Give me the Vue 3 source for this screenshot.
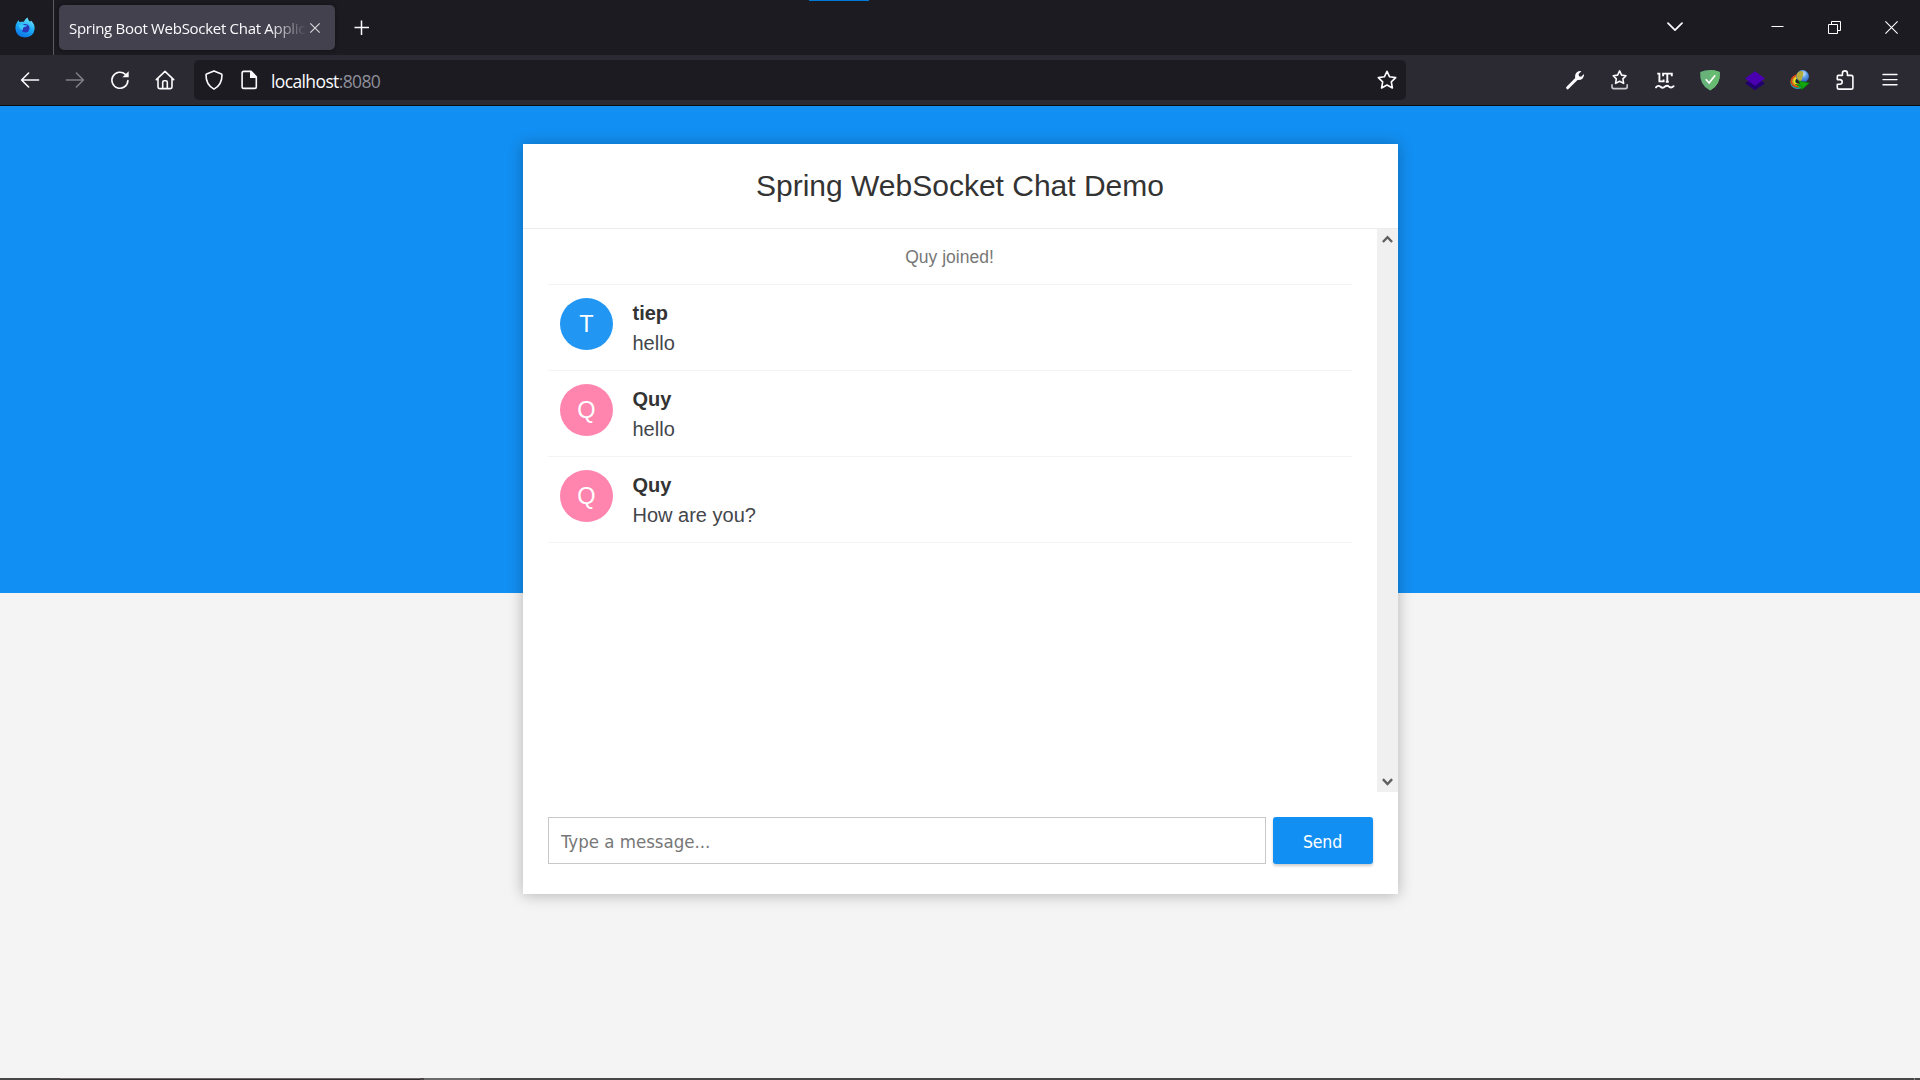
<script setup>
const messages = [
  { sender: 'tiep', text: 'hello', color: '#2196f3' },
  { sender: 'Quy', text: 'hello', color: '#ff85af' },
  { sender: 'Quy', text: 'How are you?', color: '#ff85af' },
]
</script>

<template>
  <div class="screen">
    <header class="tabstrip">
      <div class="view-btn">
        <svg width="20" height="21" viewBox="0 0 20 21">
          <defs>
            <linearGradient id="fx" x1="0.7" y1="0" x2="0.3" y2="1">
              <stop offset="0" stop-color="#6fe6fb" />
              <stop offset="0.5" stop-color="#1cabf7" />
              <stop offset="1" stop-color="#0a72e6" />
            </linearGradient>
          </defs>
          <path d="M2.3 4.8 L3.6 3.2 L4.4 5 Q6.3 4.4 8.8 4.8 Q10 1.8 12.6 0.4 Q13 3 14.8 4.4 Q16 4.6 16 3.6 Q20 7.4 19.6 12 Q18.6 20.2 10 20.4 Q1 20.2 0.4 11.4 Q0.3 7.6 2.3 4.8Z" fill="url(#fx)" />
          <circle cx="10.3" cy="11.3" r="4.2" fill="#2b36b8" />
          <path d="M3.6 8 Q6.4 6.6 9.6 8.2 Q11 8.4 12.2 8.2 Q11.4 10.2 9 10 Q7.2 11.2 8 13.2 Q4.6 12.6 3.6 8Z" fill="#3bc6fa" />
        </svg>
      </div>
      <div class="tab">
        <span class="tab-title">Spring Boot WebSocket Chat Application</span>
        <svg class="tab-close" width="12" height="12" viewBox="0 0 12 12"><path d="M1.3 1.3 L10.7 10.7 M10.7 1.3 L1.3 10.7" stroke="#d6d6da" stroke-width="1.2" fill="none" /></svg>
      </div>
      <div class="new-tab">
        <svg width="16" height="16" viewBox="0 0 16 16"><path d="M7.5 0.5 V15 M0.5 7.5 H15" stroke="#fbfbfe" stroke-width="1.5" fill="none" /></svg>
      </div>
      <div class="spacer"></div>
      <div class="list-tabs">
        <svg width="16" height="10" viewBox="0 0 16 10"><path d="M1 1.2 L8 8.2 L15 1.2" stroke="#fbfbfe" stroke-width="1.7" fill="none" stroke-linecap="round" stroke-linejoin="round" /></svg>
      </div>
      <div class="win-btn"><svg width="13" height="13" viewBox="0 0 13 13"><path d="M0.5 5.5 H12.5" stroke="#fff" /></svg></div>
      <div class="win-btn"><svg width="13" height="13" viewBox="0 0 13 13"><path d="M0.5 3.5 H9.5 V12.5 H0.5Z M3.5 3.5 V0.5 H12.5 V9.5 H9.5" stroke="#fff" fill="none" /></svg></div>
      <div class="win-btn"><svg width="13" height="13" viewBox="0 0 13 13"><path d="M0.4 0.4 L12.6 12.6 M12.6 0.4 L0.4 12.6" stroke="#fff" stroke-width="1.1" /></svg></div>
    </header>

    <nav class="toolbar">
      <div class="tool"><svg viewBox="0 0 20 20"><path d="M18.6 10 H1.8 M8.6 3 L1.6 10 L8.6 17" /></svg></div>
      <div class="tool dim"><svg viewBox="0 0 20 20"><path d="M1.4 10 H18.2 M11.4 3 L18.4 10 L11.4 17" /></svg></div>
      <div class="tool"><svg viewBox="0 0 20 20"><path d="M17.9 10.6 A8 8 0 1 1 15.4 4.4" /><path class="solid" d="M18.7 1.2 V7.3 H12.4 Z" /></svg></div>
      <div class="tool home"><svg viewBox="0 0 20 20"><path d="M1.3 9.6 L10 1.3 L18.7 9.6 M3 8.3 V17 Q3 18.6 4.6 18.6 H15.4 Q17 18.6 17 17 V8.3 M7.7 18.4 V12.2 Q7.7 10.7 9.2 10.7 H10.8 Q12.3 10.7 12.3 12.2 V18.4" /></svg></div>

      <div class="urlbar">
        <div class="url-icon"><svg viewBox="0 0 20 20"><path d="M10 0.9 L17.4 3.9 Q18 4.2 18 5 Q18 15 10 19.1 Q2 15 2 5 Q2 4.2 2.6 3.9 Z" /></svg></div>
        <div class="url-icon doc"><svg viewBox="0 0 20 20"><path d="M12 1.4 H4.8 Q3.1 1.4 3.1 3.1 V16.7 Q3.1 18.4 4.8 18.4 H15.6 Q17.3 18.4 17.3 16.7 V6.8 Z" /><path class="solid" d="M11 1 V8 H17.6 V6.8 L12.2 1Z" /></svg></div>
        <span class="url">localhost<span class="port">:8080</span></span>
        <div class="spacer"></div>
        <div class="url-icon star"><svg viewBox="0 0 20 20"><path d="M10 1.3 L12.6 6.8 L18.7 7.6 L14.3 11.9 L15.4 18 L10 15 L4.6 18 L5.7 11.9 L1.3 7.6 L7.4 6.8 Z" /></svg></div>
      </div>
      <div class="spacer"></div>

      <div class="tool"><svg viewBox="0 0 20 20"><path d="M2.6 17.8 L12 8.4" stroke-width="3" stroke="#fbfbfe" /><path class="solid" d="M10.3 8.2 Q9.4 4.4 12.1 2.1 Q14 0.6 16.4 1.2 L13.6 4.1 L14 6.3 L16.1 6.7 L19 3.9 Q19.4 6.6 17.7 8.4 Q15.4 10.6 12 9.9Z" /></svg></div>
      <div class="tool"><svg viewBox="0 0 20 20"><path d="M9.6 0.9 L11.6 5.1 L16 5.8 L12.9 8.9 L13.6 13.4 L9.6 11.3 L5.6 13.4 L6.3 8.9 L3.2 5.8 L7.6 5.1 Z" /><path d="M2 14.9 V16.8 Q2 18.6 3.8 18.6 H15.4 Q17.2 18.6 17.2 16.8 V14.9" stroke="#c9c9cd" /></svg></div>
      <div class="tool"><svg viewBox="0 0 20 20"><path d="M2.2 3.6 H4.4 V11.4 H8.6 V9.4 M8.1 6.2 V3.6 H16.8 V6.2 M12.3 3.8 V12.3 M10.8 11.8 H13.8" stroke-width="1.9" stroke-linecap="butt" stroke-linejoin="miter" /><path d="M1 17.4 Q3.4 14.6 5.6 16.8 Q7.8 18.8 10 16.6 Q12.2 14.8 14.2 16.8 Q16.4 18.4 18.6 16.2" stroke-width="1.9" /></svg></div>
      <div class="tool"><svg viewBox="0 0 20 20"><path d="M10 0 Q15.2 0.2 19.8 2 Q20.8 15 10 20.6 Q-0.8 15 0.2 2 Q4.8 0.2 10 0Z" fill="#67b279" stroke="none" /><path d="M10 0 V20.6 Q20.8 15 19.8 2 Q15.2 0.2 10 0Z" fill="#68bc71" stroke="none" /><path d="M6.2 9.8 L9.1 13 L14.8 5.8" stroke="#fff" stroke-width="1.7" /></svg></div>
      <div class="tool"><svg viewBox="0 0 20 20"><path d="M0 13.2 L10 6.5 L20 13.2 L10 20.2Z" fill="#22006f" stroke="none" /><path d="M0 8.6 L10 1.2 L20 8.6 L10 15.8Z" fill="#4a00b0" stroke="none" /></svg></div>
      <div class="tool"><svg viewBox="0 0 20 20">
        <defs>
          <radialGradient id="globe" cx="0.55" cy="0.3" r="0.75"><stop offset="0" stop-color="#d7ecff" /><stop offset="0.4" stop-color="#5b9ce8" /><stop offset="1" stop-color="#1d4fb0" /></radialGradient>
        </defs>
        <path d="M8 4.4 Q0.2 6 0.2 12.2 Q0.6 18.2 8.4 18.8 Q12 18.8 14 17.4 L12 14.4 Q6 15.4 5.6 11 Q5.8 8 9 7Z" fill="#1fa83c" stroke="none" />
        <path d="M7 5 Q1 7 1.2 12 Q2 16.2 8 16.6" stroke="#e23b1c" stroke-width="1.4" />
        <path d="M8.4 5.8 Q2.8 7.4 2.9 11.8 Q3.6 15.2 8.6 15.6" stroke="#ff9a16" stroke-width="1.3" />
        <path d="M8.4 7 Q4.2 8.4 4.3 11.6 Q5 14.2 9 14.4" stroke="#ffe21c" stroke-width="1.4" />
        <path d="M1 15 Q3.4 18.8 9 18.6" stroke="#2c8ad6" stroke-width="1" />
        <path d="M8.4 8.4 Q5.8 9.4 6 11.4 Q6.8 13 9.6 13" fill="#201f27" stroke="none" />
        <circle cx="12.6" cy="6.4" r="6.3" fill="url(#globe)" stroke="none" />
        <path d="M6.6 4.6 Q8 0.8 12.4 1 Q14.4 3.4 12.6 6.4 Q12.4 9 10.6 11.8 Q6.4 10 6.6 4.6Z" fill="#b3ae3c" stroke="none" />
        <path d="M8.6 10.8 L19.4 13 L11.4 20 L12 16 Q7.8 16.6 5.4 14.4 Q8 14.3 9.8 13.7Z" fill="#12a80c" stroke="#06680a" stroke-width="0.5" />
      </svg></div>
      <div class="tool"><svg viewBox="0 0 20 20"><path d="M2.3 6.4 Q2.3 5.4 3.3 5.4 H7.4 V3.4 Q7.4 0.9 9.9 0.9 Q12.4 0.9 12.4 3.4 V5.4 H16.2 Q17.9 5.4 17.9 7.1 V17.4 Q17.9 19.1 16.2 19.1 H4 Q2.3 19.1 2.3 17.4 V14.2 H4.8 Q7.2 14 7.2 11.9 Q7.2 9.8 4.8 9.6 H2.3 Z" /></svg></div>
      <div class="tool"><svg viewBox="0 0 20 20"><path d="M3 4.5 H17 M3 9.6 H17 M3 14.7 H17" stroke-width="1.4" /></svg></div>
    </nav>

    <main class="page">
      <section class="chat">
        <div class="chat-header"><h2>Spring WebSocket Chat Demo</h2></div>
        <div class="chat-body">
          <ul class="messages">
            <li class="event">Quy joined!</li>
            <li v-for="(m, i) in messages" :key="i" class="message">
              <i class="avatar" :style="{ backgroundColor: m.color }">{{ m.sender[0].toUpperCase() }}</i>
              <div class="body">
                <span class="sender">{{ m.sender }}</span>
                <p class="text">{{ m.text }}</p>
              </div>
            </li>
          </ul>
          <div class="scrollbar">
            <svg width="11" height="8" viewBox="0 0 11 8"><path d="M0.9 7 L5.5 2.2 L10.1 7" /></svg>
            <svg width="11" height="8" viewBox="0 0 11 8"><path d="M0.9 1.2 L5.5 6 L10.1 1.2" /></svg>
          </div>
        </div>
        <form class="composer" @submit.prevent>
          <input type="text" placeholder="Type a message..." autocomplete="off" />
          <button type="submit">Send</button>
        </form>
      </section>
    </main>
    <div class="taskbar"><i class="start"></i><i class="search"></i><i class="active"></i><i class="peek"></i></div>
  </div>
</template>

<style>
body { margin: 0; overflow: hidden; }
</style>

<style scoped>
* { box-sizing: border-box; }
.screen { width: 1920px; height: 1080px; display: flex; flex-direction: column; overflow: hidden; background: #f4f4f4; font-family: "Liberation Sans", Arial, sans-serif; }
.spacer { flex: 1; }

.tabstrip { height: 55px; flex: none; display: flex; align-items: center; background: linear-gradient(90deg, transparent 809px, #0078d7 809px, #0078d7 869px, transparent 869px) 0 0 / 100% 1px no-repeat, #1c1b22; }
.view-btn { width: 54px; height: 55px; border-right: 1px solid #5a5a61; display: flex; align-items: center; padding: 0 0 1px 15px; }
.tab { width: 276px; height: 45px; margin-left: 5px; padding: 0 14px 0 10px; border-radius: 5px; background: #42414d; box-shadow: 0 0 4px rgba(0, 0, 0, 0.45); display: flex; align-items: center; }
.tab-title { width: 238px; flex: none; overflow: hidden; white-space: nowrap; font: 15px/24px "Open Sans", "Noto Sans", sans-serif; letter-spacing: -0.29px; color: #fbfbfe; -webkit-mask-image: linear-gradient(90deg, #000 84%, transparent); mask-image: linear-gradient(90deg, #000 84%, transparent); }
.tab-close { margin-left: 2px; flex: none; }
.new-tab { width: 53px; display: flex; justify-content: center; padding-top: 1px; }
.list-tabs { width: 40px; margin-right: 54px; display: flex; justify-content: center; padding-bottom: 1px; }
.win-btn { width: 57px; display: flex; justify-content: center; }
.win-btn svg { display: block; }

.toolbar { height: 51px; flex: none; display: flex; align-items: center; padding: 0 7.5px; background: #2b2a33; border-bottom: 1px solid #0c0c0f; }
.tool { width: 45px; display: flex; justify-content: center; }
.tool.home { width: 44px; margin-right: 1px; }
.tool svg, .url-icon svg { width: 20px; height: 20px; fill: none; stroke: #fbfbfe; stroke-width: 1.6; stroke-linecap: round; stroke-linejoin: round; overflow: visible; }
.tool.dim { opacity: 0.4; }
.solid { fill: #fbfbfe; stroke: none; }
.urlbar { width: 1212px; height: 40px; margin-left: 6.5px; border-radius: 5px; background: #1c1b22; display: flex; align-items: center; }
.url-icon { width: 40px; display: flex; justify-content: center; }
.url-icon.doc { width: 30px; }
.url-icon.star { width: 38px; }
.url { margin-left: 7px; font: 17.5px/26px "Open Sans", "Noto Sans", sans-serif; letter-spacing: -0.62px; color: #fbfbfe; padding-top: 2px; }
.port { color: #8f8f9a; }

.page { flex: 1; min-height: 0; display: flex; justify-content: center; align-items: flex-start; padding-top: 38px; background: linear-gradient(#128ff2 487px, #f4f4f4 487px); }
.chat { width: 875px; height: 750px; background: #fff; box-shadow: 0 1px 14px rgba(0, 0, 0, 0.27); display: flex; flex-direction: column; margin-left: 1px; }
.chat-header { height: 85px; border-bottom: 1px solid #ececec; display: flex; justify-content: center; }
h2 { margin: 0 1px 0 0; padding-top: 24px; font-size: 30px; line-height: 36px; font-weight: 400; color: #333; }
.chat-body { height: 563px; display: flex; }
.messages { flex: 1; margin: 0; padding: 0 25px; list-style: none; }
.messages li { border-bottom: 1px solid #f4f4f4; }
.event { height: 56px; text-align: center; color: #777; font-size: 17.5px; line-height: 57px; padding-right: 1px; }
.message { height: 86px; display: flex; padding: 13px 0 0 12px; }
.avatar { width: 53px; height: 52px; flex: none; border-radius: 50%; color: #fff; font-style: normal; font-size: 23.5px; line-height: 52px; text-align: center; }
.body { margin-left: 19.5px; font-size: 20px; line-height: 30px; }
.sender { display: block; font-weight: 700; color: #333; }
.text { margin: 0; color: #43464b; }
.scrollbar { width: 21px; background: #f0f0f0; display: flex; flex-direction: column; justify-content: space-between; align-items: center; padding: 6px 0 6px; }
.scrollbar svg { fill: none; stroke: #606060; stroke-width: 2.4; }

.composer { display: flex; padding: 25px 25px 0; gap: 7px; }
input { width: 718px; height: 47px; border: 1px solid #c8c8c8; border-radius: 0; padding: 1px 12px 0; outline: none; background: #fff; font: 18.5px "DejaVu Sans Condensed", "DejaVu Sans", sans-serif; letter-spacing: 0; }
input::placeholder { color: #777; opacity: 1; }
button { width: 100px; height: 47px; border: 0; border-radius: 3px; padding: 2px 1px 0 0; background: #128ff2; color: #fff; font: 17.5px "DejaVu Sans Condensed", "DejaVu Sans", sans-serif; letter-spacing: -0.2px; box-shadow: 0 2px 3px rgba(0, 0, 0, 0.2); }

.taskbar { height: 2px; flex: none; background: #484647; display: flex; }
.taskbar i { height: 2px; }
.start { width: 60px; }
.search { width: 360px; border-top: 1px solid #6a686a; background: #302c2f; }
.active { width: 56px; margin-left: 4px; background: #6c6b6b; }
.peek { width: 1px; margin: 0 5px 0 auto; background: #8a8889; }
</style>
